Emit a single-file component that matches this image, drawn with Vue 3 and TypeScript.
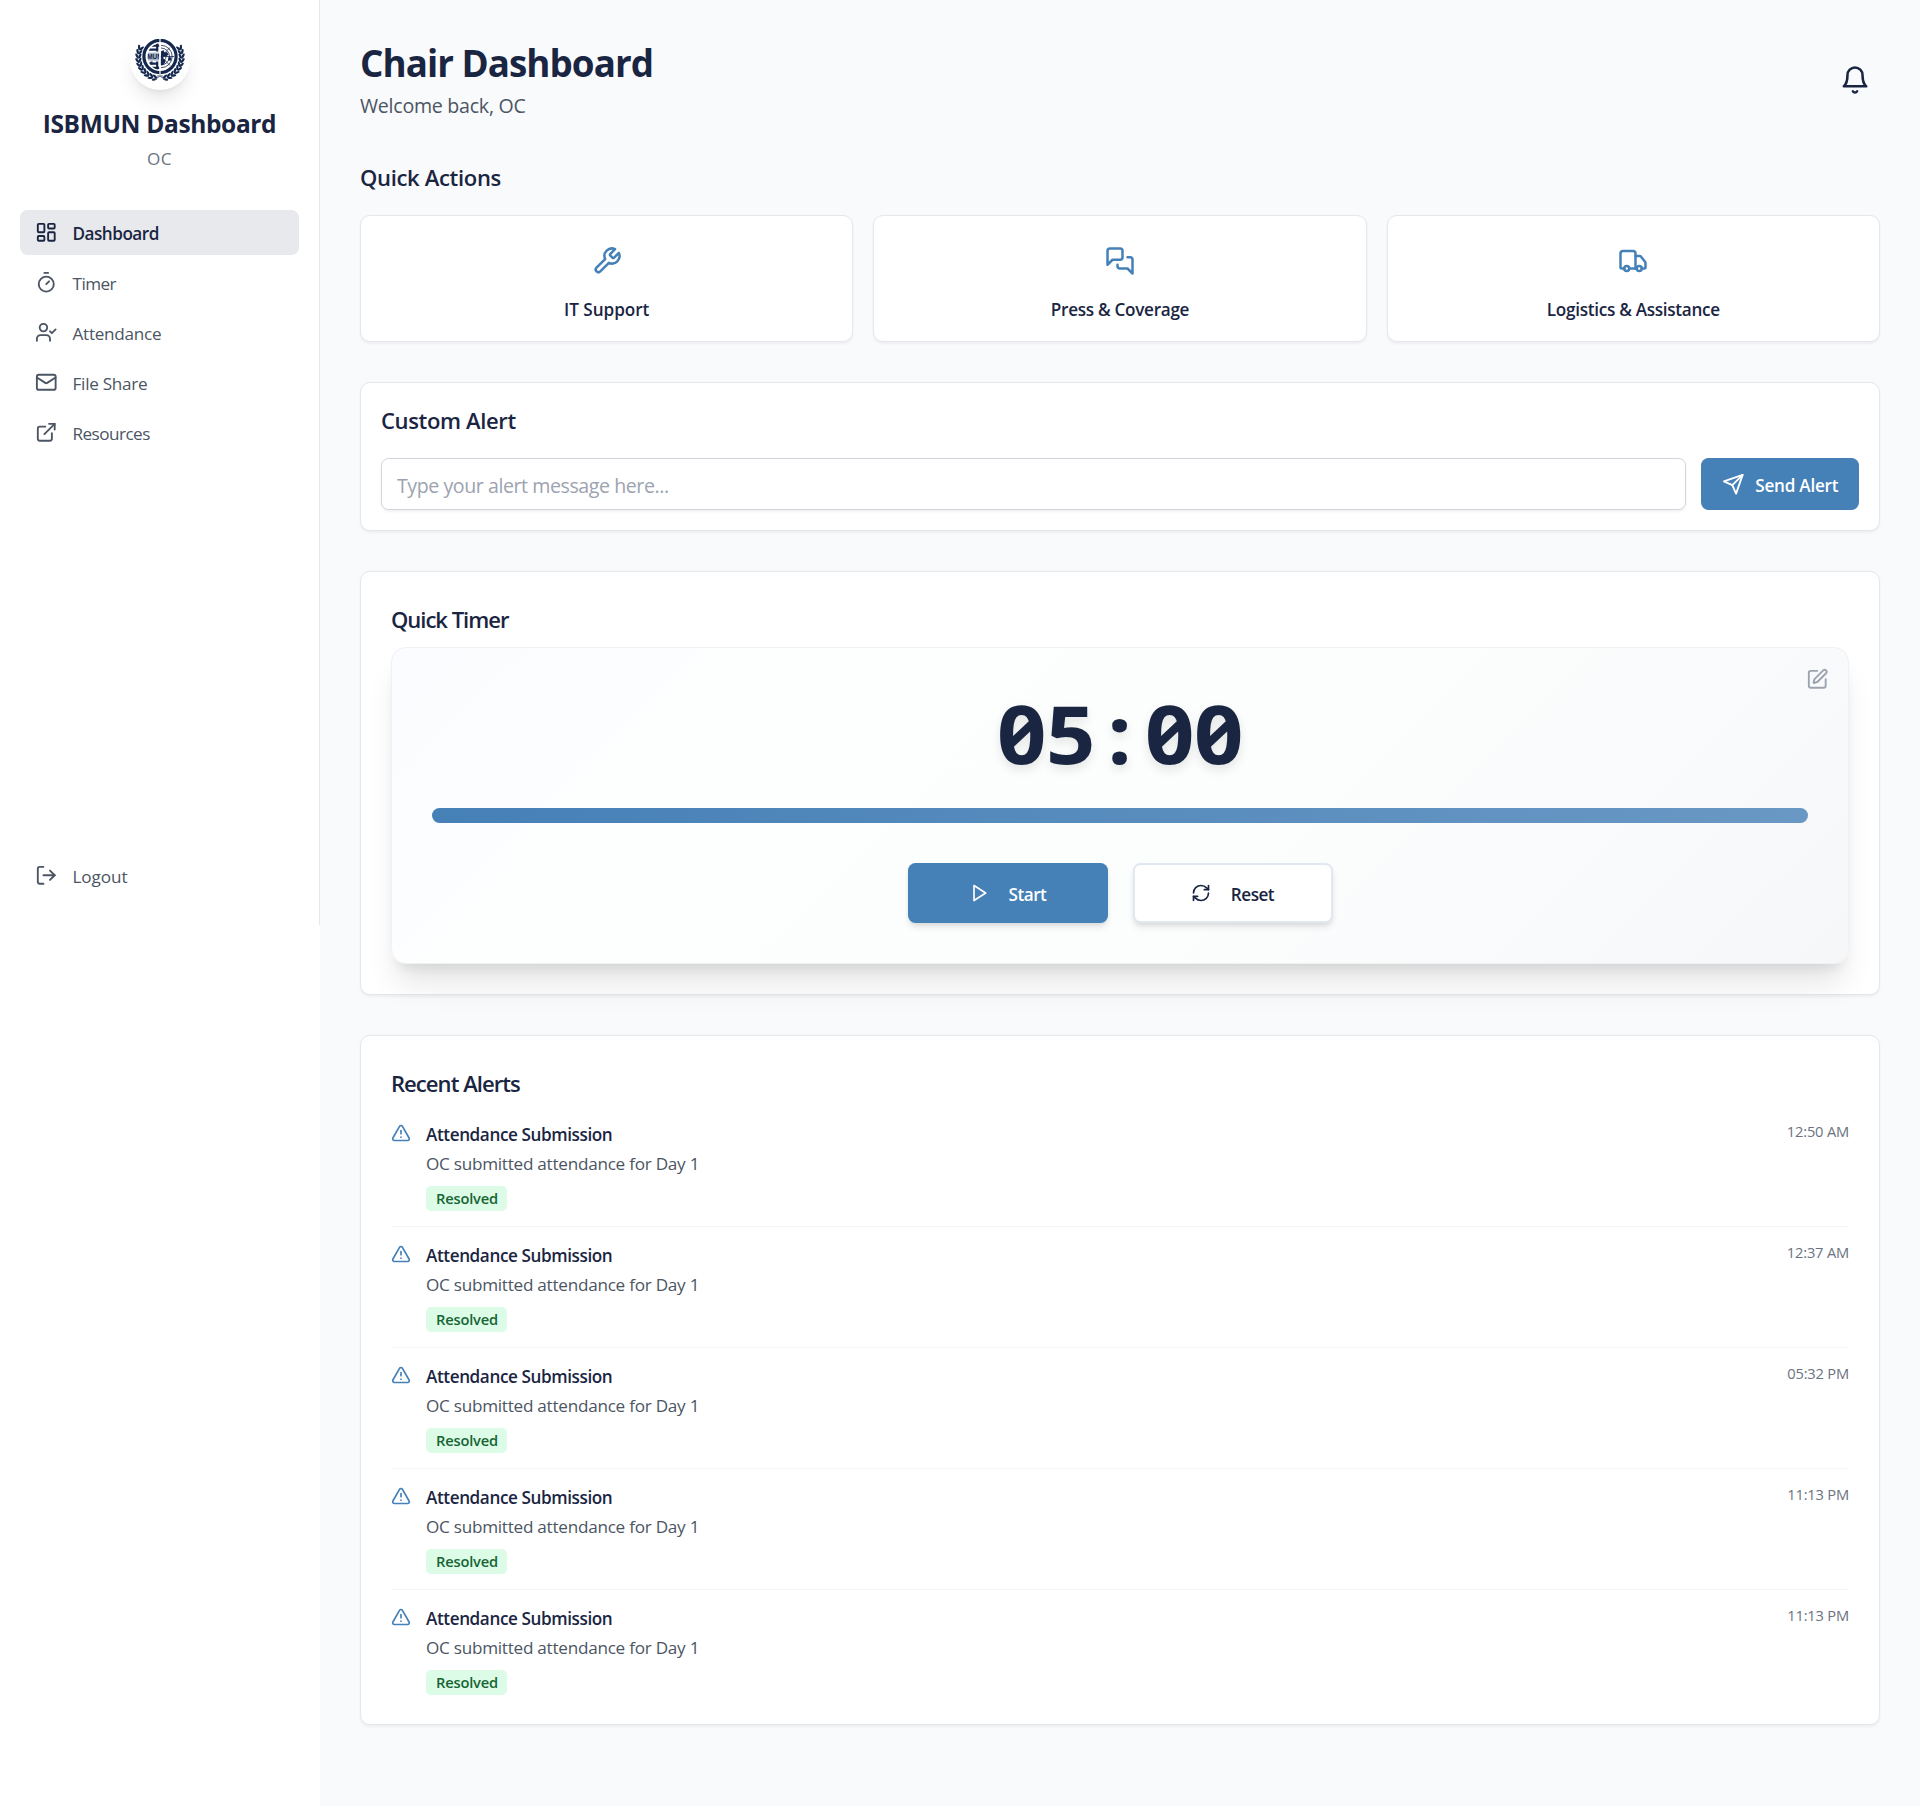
<script setup lang="ts">
interface NavItem {
  key: string
  label: string
  active?: boolean
  paths: string[]
}

interface Action {
  key: string
  label: string
  paths: string[]
}

interface AlertRow {
  id: number
  time: string
}

const navItems: NavItem[] = [
  {
    key: 'dashboard',
    label: 'Dashboard',
    active: true,
    paths: [
      'M4 3h5a1 1 0 0 1 1 1v7a1 1 0 0 1-1 1H4a1 1 0 0 1-1-1V4a1 1 0 0 1 1-1z',
      'M15 3h5a1 1 0 0 1 1 1v3a1 1 0 0 1-1 1h-5a1 1 0 0 1-1-1V4a1 1 0 0 1 1-1z',
      'M15 12h5a1 1 0 0 1 1 1v7a1 1 0 0 1-1 1h-5a1 1 0 0 1-1-1v-7a1 1 0 0 1 1-1z',
      'M4 16h5a1 1 0 0 1 1 1v3a1 1 0 0 1-1 1H4a1 1 0 0 1-1-1v-3a1 1 0 0 1 1-1z',
    ],
  },
  {
    key: 'timer',
    label: 'Timer',
    paths: ['M10 2h4', 'M12 14l3-3', 'M20 14a8 8 0 1 1-16 0 8 8 0 0 1 16 0z'],
  },
  {
    key: 'attendance',
    label: 'Attendance',
    paths: [
      'M16 21v-2a4 4 0 0 0-4-4H6a4 4 0 0 0-4 4v2',
      'M13 7a4 4 0 1 1-8 0 4 4 0 0 1 8 0z',
      'M16 11l2 2 4-4',
    ],
  },
  {
    key: 'files',
    label: 'File Share',
    paths: [
      'M4 4h16a2 2 0 0 1 2 2v12a2 2 0 0 1-2 2H4a2 2 0 0 1-2-2V6a2 2 0 0 1 2-2z',
      'm22 7-8.97 5.7a1.94 1.94 0 0 1-2.06 0L2 7',
    ],
  },
  {
    key: 'resources',
    label: 'Resources',
    paths: ['M15 3h6v6', 'M10 14 21 3', 'M18 13v6a2 2 0 0 1-2 2H5a2 2 0 0 1-2-2V8a2 2 0 0 1 2-2h6'],
  },
]

const actions: Action[] = [
  {
    key: 'it',
    label: 'IT Support',
    paths: [
      'M14.7 6.3a1 1 0 0 0 0 1.4l1.6 1.6a1 1 0 0 0 1.4 0l3.77-3.77a6 6 0 0 1-7.94 7.94l-6.91 6.91a2.12 2.12 0 0 1-3-3l6.91-6.91a6 6 0 0 1 7.94-7.94l-3.76 3.76z',
    ],
  },
  {
    key: 'press',
    label: 'Press & Coverage',
    paths: [
      'M14 9a2 2 0 0 1-2 2H6l-4 4V4a2 2 0 0 1 2-2h8a2 2 0 0 1 2 2z',
      'M18 9h2a2 2 0 0 1 2 2v11l-4-4h-6a2 2 0 0 1-2-2v-1',
    ],
  },
  {
    key: 'logistics',
    label: 'Logistics & Assistance',
    paths: [
      'M14 18V6a2 2 0 0 0-2-2H4a2 2 0 0 0-2 2v11a1 1 0 0 0 1 1h2',
      'M15 18H9',
      'M19 18h2a1 1 0 0 0 1-1v-3.65a1 1 0 0 0-.22-.624l-3.48-4.35A1 1 0 0 0 17.52 8H14',
      'M19 18a2 2 0 1 1-4 0 2 2 0 0 1 4 0z',
      'M9 18a2 2 0 1 1-4 0 2 2 0 0 1 4 0z',
    ],
  },
]

const alerts: AlertRow[] = [
  { id: 1, time: '12:50 AM' },
  { id: 2, time: '12:37 AM' },
  { id: 3, time: '05:32 PM' },
  { id: 4, time: '11:13 PM' },
  { id: 5, time: '11:13 PM' },
]

const digits = ['0', '5', ':', '0', '0']

// Laurel leaves follow an arc around the crest; the right branch mirrors the left one.
const leaves = Array.from({ length: 10 }, (_, i) => {
  const angle = 104 + i * 11.2
  const rad = (angle * Math.PI) / 180
  const place = (r: number, tilt: number) =>
    `translate(${(25 + Math.cos(rad) * r).toFixed(2)} ${(18 + Math.sin(rad) * r).toFixed(2)}) rotate(${(angle + tilt).toFixed(1)})`
  return [place(20.2, 118), place(23, 62)]
}).flat()
</script>

<template>
  <div class="page">
    <aside class="side">
      <div class="side-inner">
        <div class="brand">
          <div class="logo">
            <svg width="50" height="42" viewBox="0 0 50 42">
              <defs>
                <clipPath id="half-left"><path d="M24.3 4.2v26.6A13.4 13.4 0 0 1 24.3 4.2z" /></clipPath>
              </defs>
              <g fill="#14274e">
                <ellipse v-for="(t, i) in leaves" :key="'l' + i" rx="2.8" ry="1.15" :transform="t" />
                <g transform="matrix(-1 0 0 1 50 0)">
                  <ellipse v-for="(t, i) in leaves" :key="'r' + i" rx="2.8" ry="1.15" :transform="t" />
                </g>
              </g>
              <circle cx="25" cy="17.5" r="18.2" fill="#fff" />
              <circle cx="25" cy="17.5" r="16.1" fill="#fff" stroke="#14274e" stroke-width="3.2" />
              <g clip-path="url(#half-left)">
                <path d="M10 6.6h15M10 10.6h12M10 24.6h12M10 28.8h15" stroke="#14274e" stroke-width="2.3" />
                <path d="M22.2 3v9.5M22.2 22.5v8M16.5 22.5v3" stroke="#14274e" stroke-width="2.2" />
                <rect x="11" y="13.6" width="14" height="8" fill="#a9b3c6" />
                <text x="12.2" y="20.3" class="crest-text">MUN</text>
              </g>
              <g fill="none" stroke="#14274e" stroke-width="0.8">
                <path d="M26 9a8.5 8.5 0 0 1 0 17M26 6.3a11.2 11.2 0 0 1 0 22.4M26 12.5a5 5 0 0 1 0 10" />
                <path d="M26 17.5h13M26 17.5l9-9M26 17.5l9 9" />
              </g>
              <path
                d="M26 12.5l2.5-1.5 1 2.5 2.5-.5 1.5 2.5-2.5 2.2-2-.7-1 2.5 2.5 1.5-.5 3-3 2.5-1.5-1zM33.5 18l3 .5-1 3.5-2.5-1z"
                fill="#14274e"
              />
              <path d="M25 0v35" stroke="#fff" stroke-width="1.2" />
              <path d="M20 40.5l5-3.5 5 3.5M22 37h6" fill="none" stroke="#5a6886" stroke-width="1" />
            </svg>
          </div>
          <h1 class="brand-name">ISBMUN Dashboard</h1>
          <p class="brand-role">OC</p>
        </div>

        <nav class="nav">
          <a
            v-for="item in navItems"
            :key="item.key"
            class="nav-item"
            :class="['nav-' + item.key, { active: item.active }]"
          >
            <svg class="icon nav-icon" viewBox="0 0 24 24">
              <path v-for="p in item.paths" :key="p" :d="p" />
            </svg>
            <span class="drop">{{ item.label }}</span>
          </a>
        </nav>

        <a class="nav-item logout">
          <svg class="icon nav-icon" viewBox="0 0 24 24">
            <path d="M9 21H5a2 2 0 0 1-2-2V5a2 2 0 0 1 2-2h4" />
            <path d="M16 17l5-5-5-5" />
            <path d="M21 12H9" />
          </svg>
          <span class="drop">Logout</span>
        </a>
      </div>
    </aside>

    <main class="main">
      <header class="head">
        <div class="head-text">
          <h2 class="title">Chair Dashboard</h2>
          <p class="welcome">Welcome back, OC</p>
        </div>
        <button class="bell">
          <svg class="icon" width="30" height="30" viewBox="0 0 24 24">
            <path d="M6 8a6 6 0 0 1 12 0c0 7 3 9 3 9H3s3-2 3-9" />
            <path d="M10.3 21a1.94 1.94 0 0 0 3.4 0" />
          </svg>
        </button>
      </header>

      <section>
        <h3 class="heading quick-actions">Quick Actions</h3>
        <div class="actions">
          <button v-for="a in actions" :key="a.key" class="card action" :class="a.key">
            <svg class="icon" width="30" height="30" viewBox="0 0 24 24">
              <path v-for="p in a.paths" :key="p" :d="p" />
            </svg>
            <span class="action-label drop">{{ a.label }}</span>
          </button>
        </div>
      </section>

      <section class="card custom">
        <h3 class="heading custom-heading">Custom Alert</h3>
        <div class="custom-row">
          <input class="field" type="text" placeholder="Type your alert message here..." />
          <button class="send">
            <svg class="icon" width="22.5" height="22.5" viewBox="0 0 24 24">
              <path d="m22 2-7 20-4-9-9-4Z" />
              <path d="M22 2 11 13" />
            </svg>
            <span class="drop">Send Alert</span>
          </button>
        </div>
      </section>

      <section class="card timer-card">
        <h3 class="heading timer-heading">Quick Timer</h3>
        <div class="timer">
          <svg class="icon edit" width="22.5" height="22.5" viewBox="0 0 24 24">
            <path d="M12 3H5a2 2 0 0 0-2 2v14a2 2 0 0 0 2 2h14a2 2 0 0 0 2-2v-7" />
            <path d="M18.375 2.625a1 1 0 0 1 3 3l-9.013 9.014a2 2 0 0 1-.853.505l-2.873.84a.5.5 0 0 1-.62-.62l.84-2.873a2 2 0 0 1 .506-.852z" />
          </svg>
          <div class="clock">
            <span v-for="(d, i) in digits" :key="i" class="digit">{{ d }}</span>
          </div>
          <div class="bar"></div>
          <div class="controls">
            <button class="ctl start">
              <svg class="icon" width="20" height="20" viewBox="0 0 24 24"><path d="M6 3l14 9-14 9z" /></svg>
              <span class="drop">Start</span>
            </button>
            <button class="ctl reset">
              <svg class="icon" width="20" height="20" viewBox="0 0 24 24">
                <path d="M3 12a9 9 0 0 1 9-9 9.75 9.75 0 0 1 6.74 2.74L21 8" />
                <path d="M21 3v5h-5" />
                <path d="M21 12a9 9 0 0 1-9 9 9.75 9.75 0 0 1-6.74-2.74L3 16" />
                <path d="M8 16H3v5" />
              </svg>
              <span class="drop">Reset</span>
            </button>
          </div>
        </div>
      </section>

      <section class="card recent">
        <h3 class="heading recent-heading">Recent Alerts</h3>
        <ul class="rows">
          <li v-for="row in alerts" :key="row.id" class="row">
            <svg class="icon warn" width="20" height="20" viewBox="0 0 24 24">
              <path d="m21.73 18-8-14a2 2 0 0 0-3.48 0l-8 14A2 2 0 0 0 4 21h16a2 2 0 0 0 1.73-3" />
              <path d="M12 9v4" />
              <path d="M12 17h.01" />
            </svg>
            <div class="row-body">
              <p class="row-title drop">Attendance Submission</p>
              <p class="row-text">OC submitted attendance for Day 1</p>
              <span class="badge">Resolved</span>
            </div>
            <time class="row-time">{{ row.time }}</time>
          </li>
        </ul>
      </section>
    </main>
  </div>
</template>

<style>
body {
  background: #f9fafc;
}
</style>

<style scoped>
* {
  box-sizing: border-box;
}
.page {
  display: flex;
  min-height: 1806px;
  background: #f9fafc;
  color: #1a2542;
  font-family: 'Open Sans', 'Noto Sans', sans-serif;
  font-size: 17.15px;
  line-height: 25px;
}
h1, h2, h3, p, ul {
  margin: 0;
  padding: 0;
}
button {
  font: inherit;
  color: inherit;
  border: 0;
  background: none;
  padding: 0;
}
.icon {
  display: block;
  flex: none;
  fill: none;
  stroke: currentColor;
  stroke-width: 2;
  stroke-linecap: round;
  stroke-linejoin: round;
}
/* optical nudge so labels sit centred against their icons */
.drop {
  padding-top: 1px;
  margin-bottom: -1px;
}
span.drop {
  display: block;
  white-space: nowrap;
}

.side {
  width: 320px;
  flex: none;
  background: #fff;
}
.side-inner {
  display: flex;
  flex-direction: column;
  height: 925px;
  padding: 30px 20px 27px;
  border-right: 1px solid #e5e7eb;
}
.brand {
  display: flex;
  flex-direction: column;
  align-items: center;
  height: 180px;
}
.logo {
  display: flex;
  align-items: center;
  justify-content: center;
  width: 60px;
  height: 60px;
  border-radius: 50%;
  background: #fff;
  box-shadow: 0 12.5px 18.75px -3.75px rgba(0, 0, 0, 0.1), 0 5px 7.5px -5px rgba(0, 0, 0, 0.1);
}
.crest-text {
  font: 700 6.4px 'Liberation Sans', sans-serif;
  fill: #14274e;
}
.brand-name {
  margin-top: 16px;
  font-size: 24.5px;
  line-height: 35px;
  font-weight: 700;
  letter-spacing: -0.36px;
  white-space: nowrap;
}
.brand-role {
  margin-top: 5px;
  color: #6b7280;
  letter-spacing: 0.4px;
}
.nav {
  display: flex;
  flex-direction: column;
  gap: 5px;
}
.nav-item {
  display: flex;
  align-items: center;
  gap: 15px;
  height: 45px;
  padding: 0 15px;
  border-radius: 7.5px;
  color: #4b5563;
  letter-spacing: -0.27px;
}
.nav-item.active {
  background: #e8e9ec;
  color: #1a2542;
  font-weight: 550;
  letter-spacing: -0.5px;
}
.nav-timer,
.nav-resources {
  letter-spacing: -0.55px;
}
.nav-icon {
  width: 22.5px;
  height: 22.5px;
}
.logout {
  margin-top: auto;
  letter-spacing: -0.08px;
}

.main {
  flex: 1;
  display: flex;
  flex-direction: column;
  gap: 40px;
  padding: 40px;
}
.head {
  display: flex;
  justify-content: space-between;
  align-items: center;
  height: 80px;
}
.head-text {
  padding-top: 2px;
}
.title {
  font-size: 36.75px;
  line-height: 45px;
  font-weight: 700;
  letter-spacing: -0.95px;
}
.welcome {
  margin-top: 5px;
  font-size: 19.6px;
  line-height: 30px;
  color: #4b5563;
  letter-spacing: -0.26px;
}
.bell {
  display: flex;
  align-items: center;
  justify-content: center;
  width: 50px;
  height: 50px;
}
.heading {
  font-size: 22.05px;
  line-height: 35px;
  font-weight: 550;
  letter-spacing: -0.34px;
}
.custom-heading {
  letter-spacing: -0.38px;
}
.timer-heading {
  letter-spacing: -1.02px;
}
.recent-heading {
  letter-spacing: -0.96px;
}
.card {
  background: #fff;
  border: 1px solid #e5e7eb;
  border-radius: 10px;
  box-shadow: 0 1.25px 2.5px rgba(0, 0, 0, 0.05);
}
.actions {
  display: grid;
  grid-template-columns: repeat(3, 1fr);
  gap: 20px;
  margin-top: 20px;
}
.action {
  display: flex;
  flex-direction: column;
  align-items: center;
  height: 127px;
  padding-top: 30px;
  color: #4580b7;
}
.action-label {
  margin-top: 20px;
  color: #1a2542;
  font-weight: 550;
  letter-spacing: -0.3px;
}
.it .action-label {
  letter-spacing: -0.05px;
}
.custom {
  height: 149px;
  padding: 20px;
}
.custom-row {
  display: flex;
  gap: 15px;
  margin-top: 20px;
}
.field {
  flex: 1;
  min-width: 0;
  height: 52px;
  padding: 2px 15px 0;
  border: 1px solid #d1d5db;
  border-radius: 7.5px;
  background: #fff;
  font: 400 19.6px 'Open Sans', 'Noto Sans', sans-serif;
  letter-spacing: -0.44px;
  box-shadow: 0 1.25px 2.5px rgba(0, 0, 0, 0.05);
}
.field::placeholder {
  color: #9ca3af;
  opacity: 1;
}
.send {
  display: flex;
  align-items: center;
  justify-content: center;
  gap: 11px;
  width: 158px;
  height: 52px;
  border-radius: 7.5px;
  background: #4580b7;
  color: #fff;
  font-weight: 600;
  letter-spacing: -0.24px;
}
.timer-card {
  height: 424px;
  padding: 30px;
}
.timer {
  position: relative;
  display: flex;
  flex-direction: column;
  align-items: center;
  height: 316.5px;
  margin-top: 10px;
  padding: 0 40px;
  border: 1px solid #f0f1f3;
  border-radius: 15px;
  background: linear-gradient(135deg, #fbfcff 0%, #fdfefe 22%, #fcfdfd 60%, #f6f7f9 100%);
  box-shadow: 0 25px 31.25px -6.25px rgba(0, 0, 0, 0.1), 0 10px 12.5px -7.5px rgba(0, 0, 0, 0.1);
}
.edit {
  position: absolute;
  top: 20px;
  right: 20px;
  color: #9ca3af;
}
.clock {
  display: flex;
  margin-top: 40px;
  font-size: 80px;
  line-height: 90px;
  font-weight: 700;
  font-feature-settings: 'zero';
  text-shadow: 0 5px 10px rgba(0, 0, 0, 0.1);
}
.digit {
  width: 49.4px;
  text-align: center;
  transform: scaleX(1.08);
}
.bar {
  align-self: stretch;
  height: 15px;
  margin-top: 30px;
  border-radius: 8px;
  background: linear-gradient(90deg, #4580b7, #6a98c4);
}
.controls {
  display: flex;
  gap: 25px;
  margin-top: 40px;
}
.ctl {
  display: flex;
  align-items: center;
  justify-content: center;
  gap: 20px;
  width: 200px;
  height: 60px;
  border-radius: 7.5px;
  font-weight: 600;
  box-shadow: 0 5px 7.5px -1.25px rgba(0, 0, 0, 0.1), 0 2.5px 5px -2.5px rgba(0, 0, 0, 0.1);
}
.start {
  background: #4580b7;
  color: #fff;
  letter-spacing: -0.5px;
}
.reset {
  border: 2px solid #e2e8f0;
  background: #fff;
  font-weight: 550;
  letter-spacing: -0.5px;
}
.recent {
  position: relative;
  height: 690px;
  padding: 30px;
}
.rows {
  margin-top: 5px;
  list-style: none;
}
.row {
  display: flex;
  align-items: flex-start;
  gap: 15px;
  height: 121px;
  padding-top: 15px;
  border-bottom: 1px solid #f3f4f6;
}
.row:last-child {
  height: 105px;
  border-bottom: 0;
}
.warn {
  margin-top: 2px;
  color: #4580b7;
}
.row-body {
  flex: 1;
}
.row-title {
  font-weight: 550;
  letter-spacing: -0.41px;
}
.row-text {
  margin-top: 5px;
  color: #4b5563;
  letter-spacing: -0.26px;
}
.badge {
  display: block;
  width: 81px;
  height: 25px;
  margin-top: 10px;
  padding: 2px 0 0 10px;
  border-radius: 5px;
  background: #dcfce7;
  color: #166534;
  font-size: 14.7px;
  line-height: 20px;
  font-weight: 550;
  letter-spacing: -0.2px;
}
.row-time {
  color: #6b7280;
  font-size: 14.7px;
  line-height: 20px;
  letter-spacing: -0.2px;
}
</style>
